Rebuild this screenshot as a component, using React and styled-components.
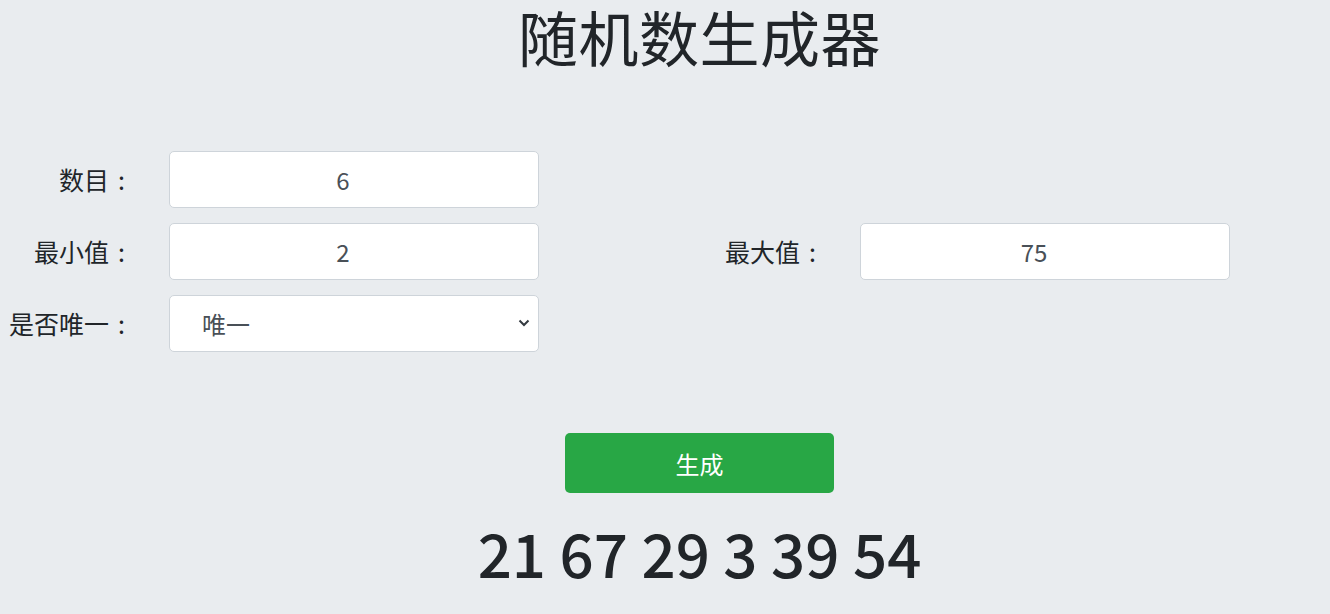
import React, { useState } from 'react'
import styled, { createGlobalStyle } from 'styled-components'

const GlobalStyle = createGlobalStyle`
  html, body {
    margin: 0;
    padding: 0;
    background: #e9ecef;
    color: #212529;
    font-family: "Noto Sans CJK SC", "Noto Sans", sans-serif;
  }
`

const Page = styled.div`
  width: 1330px;
  min-height: 614px;
`

const Centered = styled.div`
  padding-left: 69px;
  display: flex;
  justify-content: center;
`

const Title = styled.h1`
  margin: 0;
  font-size: 60px;
  line-height: 72px;
  font-weight: 400;
  letter-spacing: 0.5px;
`

const Form = styled.form`
  margin-top: 79px;
  display: grid;
  grid-template-columns: 125px 370px 233px 370px;
  column-gap: 44px;
  row-gap: 15px;
  align-items: center;
`

const Label = styled.label`
  grid-column: ${props => props.col || 1};
  text-align: right;
  font-size: 25px;
  line-height: 57px;
  white-space: nowrap;
`

const Colon = styled.span`
  margin-left: 9px;
`

const Field = styled.input`
  grid-column: ${props => props.col || 2};
  box-sizing: border-box;
  width: 370px;
  height: 57px;
  padding: 0 22px 0 0;
  border: 1px solid #ced4da;
  border-radius: 5px;
  background: #fff;
  color: #495057;
  font-family: inherit;
  font-size: 24px;
  text-align: center;
  outline: none;
`

const SelectWrap = styled.div`
  grid-column: 2;
  position: relative;
  width: 370px;
  height: 57px;
`

const Select = styled.select`
  box-sizing: border-box;
  width: 100%;
  height: 57px;
  appearance: none;
  border: 1px solid #ced4da;
  border-radius: 5px;
  background: #fff;
  color: #495057;
  font-family: inherit;
  font-size: 24px;
  padding: 0 40px 0 32px;
  outline: none;
`

const Chevron = styled.svg`
  position: absolute;
  right: 9px;
  top: 24px;
  pointer-events: none;
`

const ButtonRow = styled(Centered)`
  margin-top: 81px;
`

const GenerateButton = styled.button`
  width: 269px;
  height: 60px;
  border: none;
  border-radius: 5px;
  background: #28a745;
  color: #fff;
  font-family: inherit;
  font-size: 24px;
  cursor: pointer;
`

const Result = styled.div`
  margin-top: 17px;
  font-size: 60px;
  line-height: 84px;
  font-weight: 500;
  white-space: nowrap;
`

const App = () => {
  const [count, setCount] = useState('6')
  const [min, setMin] = useState('2')
  const [max, setMax] = useState('75')
  const [unique, setUnique] = useState('1')
  const [numbers, setNumbers] = useState([21, 67, 29, 3, 39, 54])

  const generate = () => {
    const n = parseInt(count, 10) || 0
    const lo = parseInt(min, 10) || 0
    const hi = parseInt(max, 10) || 0
    const out = []
    while (out.length < n && (unique === '0' || out.length <= hi - lo)) {
      const v = lo + Math.floor(Math.random() * (hi - lo + 1))
      if (unique === '1' && out.includes(v)) continue
      out.push(v)
    }
    setNumbers(out)
  }

  return (
    <Page>
      <GlobalStyle />
      <Centered>
        <Title>随机数生成器</Title>
      </Centered>
      <Form onSubmit={e => e.preventDefault()}>
        <Label>数目<Colon>:</Colon></Label>
        <Field value={count} onChange={e => setCount(e.target.value)} />

        <Label>最小值<Colon>:</Colon></Label>
        <Field value={min} onChange={e => setMin(e.target.value)} />
        <Label col={3}>最大值<Colon>:</Colon></Label>
        <Field col={4} value={max} onChange={e => setMax(e.target.value)} />

        <Label>是否唯一<Colon>:</Colon></Label>
        <SelectWrap>
          <Select value={unique} onChange={e => setUnique(e.target.value)}>
            <option value="1">唯一</option>
            <option value="0">不唯一</option>
          </Select>
          <Chevron width="12" height="8" viewBox="0 0 12 8">
            <path d="M1.5 1.5 L6 6 L10.5 1.5" fill="none" stroke="#343a40" strokeWidth="2" />
          </Chevron>
        </SelectWrap>
      </Form>
      <ButtonRow>
        <GenerateButton type="button" onClick={generate}>生成</GenerateButton>
      </ButtonRow>
      <Centered>
        <Result>{numbers.join(' ')}</Result>
      </Centered>
    </Page>
  )
}

export default App
